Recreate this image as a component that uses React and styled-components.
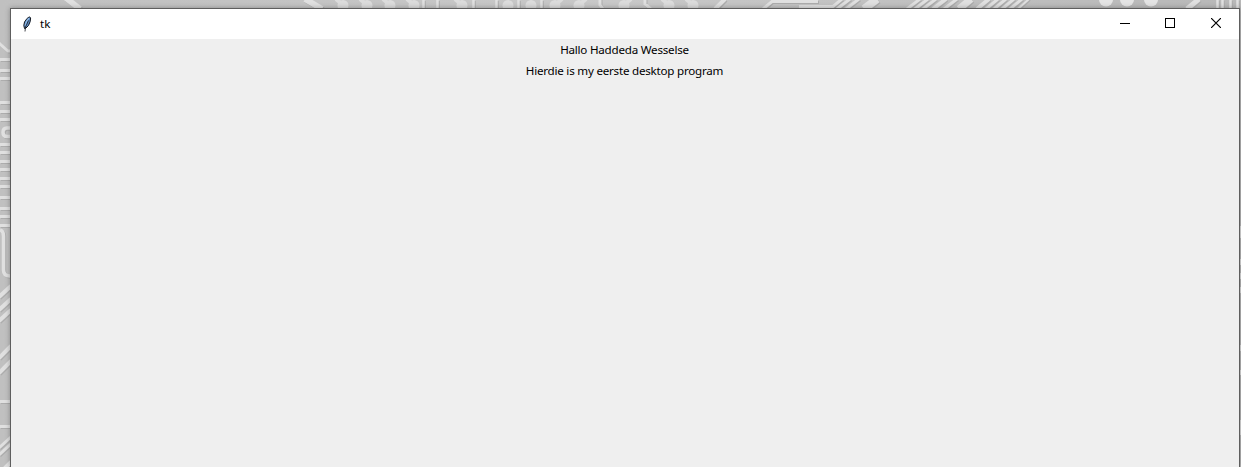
import React from 'react';
import styled, { createGlobalStyle } from 'styled-components';

const GlobalStyle = createGlobalStyle`
  * { box-sizing: border-box; }
  body { margin: 0; overflow: hidden; background: #c1c1c1; }
`;

const Desktop = styled.div`
  position: relative;
  height: 100vh;
  padding: 8px 1px 0 10px;
  overflow: hidden;
`;

const Wallpaper = styled.svg`
  position: absolute;
  inset: 0;
  display: block;
`;

const Window = styled.main`
  position: relative;
  height: 100%;
  display: flex;
  flex-direction: column;
  border: 1px solid #5e5e5e;
  border-bottom: 0;
  background: #efefef;
  color: #000;
  font-family: 'Noto Sans', 'Open Sans', sans-serif;
  font-size: 11.6px;
  box-shadow: 0 0 5px rgba(0, 0, 0, 0.3);
`;

const TitleBar = styled.header`
  height: 30px;
  flex: none;
  display: flex;
  align-items: center;
  background: #fff;
  padding-left: 8px;
`;

const Title = styled.span`
  flex: 1;
  margin-left: 5px;
  line-height: 16px;
`;

const Controls = styled.div`
  display: flex;
  height: 28px;
  align-self: flex-start;
`;

const ControlButton = styled.button`
  width: ${({ $width }) => $width || 46}px;
  height: 28px;
  padding: 0;
  border: 0;
  background: transparent;
  display: flex;
  align-items: center;
  justify-content: center;
`;

const Content = styled.section`
  display: flex;
  flex-direction: column;
  align-items: center;
  padding-right: 1px;
`;

const Label = styled.div`
  height: 21px;
  line-height: 21px;
  white-space: nowrap;
  letter-spacing: -0.22px;
`;

const diagonals = [
  [305, -1, 322, 9, 6], [66, -2, 80, 9, 6],
  [715, 9, 725, -1, 4], [837, 9, 850, -1, 3], [846, 9, 859, -1, 3],
  [864, 9, 877, -1, 8], [907, 9, 920, -1, 3], [915, 9, 928, -1, 3],
  [923, 9, 936, -1, 3], [933, 9, 946, -1, 4], [944, 9, 957, -1, 3],
  [959, 9, 971, -1, 7], [977, 9, 989, -1, 4], [986, 9, 998, -1, 3],
  [994, 9, 1006, -1, 3], [1002, 9, 1014, -1, 3], [1010, 9, 1022, -1, 3],
  [1018, 9, 1029, -1, 2], [1187, 9, 1199, -1, 5],
  [-1, 297, 11, 286, 4], [-1, 310, 11, 299, 4],
  [-1, 321, 11, 310, 4], [-1, 358, 11, 346, 4], [-1, 373, 11, 361, 4],
  [-1, 448, 11, 437, 3], [-1, 455, 11, 444, 3], [-1, 474, 11, 462, 4],
];
const sideRows = [59, 70, 78, 102, 111, 119, 144, 152, 161, 169, 178, 186, 197, 208, 216, 225, 401, 426];
const verticals = [423, 437, 473, 496, 518, 541, 1217, 1222, 1230, 1237];
const pads = [
  [343, -1], [367, -1], [390, -1], [414, -1], [462, -1], [508, 0],
  [531, 0], [555, 1], [579, 1], [624, 1], [669, -1], [693, -1],
];

function CircuitWallpaper() {
  return (
    <Wallpaper width="1241" height="467" viewBox="0 0 1241 467" aria-hidden="true">
      <defs>
        <linearGradient id="metal" x2="1" y2="0">
          <stop stopColor="#c0c0c0" />
          <stop offset=".5" stopColor="#c8c8c8" />
          <stop offset="1" stopColor="#b8b8b8" />
        </linearGradient>
        <g id="traces" fill="none">
          {diagonals.map(([x1, y1, x2, y2, w]) => (
            <path key={`${x1}-${y1}`} d={`M${x1} ${y1}L${x2} ${y2}`} strokeWidth={w} />
          ))}
          {sideRows.map((y) => <path key={y} d={`M0 ${y}.5H11`} strokeWidth="3" />)}
          {verticals.map((x) => <path key={x} d={`M${x}.5 0V9`} strokeWidth="2.500" />)}
          <path d="M-1 43L8 51H11" strokeWidth="3" />
          <path d="M600 -1V5L603 9M645 -1V4L651 9M763 9L772 1.500H818M799 6.500H833L842 -1" strokeWidth="3" />
          <path d="M11 128H7Q3 128 3 132.500Q3 136.500 7 136.500H11" strokeWidth="3.500" />
          <path d="M0 230Q3.500 231 3.500 236V270Q3.500 276 10 276" strokeWidth="3.500" />
        </g>
      </defs>
      <rect width="1241" height="467" fill="url(#metal)" />
      <use href="#traces" stroke="#adadad" transform="translate(1 1)" />
      <use href="#traces" stroke="#e0e0e0" />
      {pads.map(([x, lean]) => (
        <g key={x} fill="#dcdcdc">
          <circle cx={x} cy="5.500" r="5.500" />
          {lean !== 0 && <path d={`M${x + lean * 7} -1L${x} 5`} stroke="#dcdcdc" strokeWidth="4" />}
        </g>
      ))}
      {[1106, 1127, 1151].map((x) => <circle key={x} cx={x} cy="-.5" r="7" fill="#e4e4e4" />)}
      <path d="M1240.500 226V238M1240.500 259V265M1240.500 273V279M1240.500 287V293M1240.500 345V351M1240.500 370V375M1240.500 420V435" stroke="#ddd" />
    </Wallpaper>
  );
}

function FeatherIcon() {
  return (
    <svg width="16" height="16" viewBox="0 0 16 16" aria-hidden="true">
      <path d="M5.500 12.500L4.800 9.500L5.500 6L8 2.500L10.500 .8L11.600 2L11.200 5.500L9.500 9.500L7 12Z" fill="#5d8cc4" stroke="#14181f" strokeWidth="1" />
      <path d="M10 2L7.500 5.500L6.300 9.500" fill="none" stroke="#8fb8e4" strokeWidth="1.300" />
      <path d="M9.500 4.500L6.500 11L6 15.500" fill="none" stroke="#14181f" strokeWidth=".8" />
    </svg>
  );
}

export default function App() {
  return (
    <>
      <GlobalStyle />
      <Desktop>
        <CircuitWallpaper />
        <Window>
          <TitleBar>
            <FeatherIcon />
            <Title>tk</Title>
            <Controls>
              <ControlButton aria-label="Minimize" $width={44}>
                <svg width="10" height="10" shapeRendering="crispEdges"><path d="M0 5.500H10" stroke="#000" /></svg>
              </ControlButton>
              <ControlButton aria-label="Maximize">
                <svg width="10" height="10" shapeRendering="crispEdges"><rect x=".5" y=".5" width="9" height="9" fill="none" stroke="#000" /></svg>
              </ControlButton>
              <ControlButton aria-label="Close">
                <svg width="10" height="10"><path d="M0 0L10 10M10 0L0 10" stroke="#000" strokeWidth="1.200" /></svg>
              </ControlButton>
            </Controls>
          </TitleBar>
          <Content>
            <Label>Hallo Haddeda Wesselse</Label>
            <Label>Hierdie is my eerste desktop program</Label>
          </Content>
        </Window>
      </Desktop>
    </>
  );
}
